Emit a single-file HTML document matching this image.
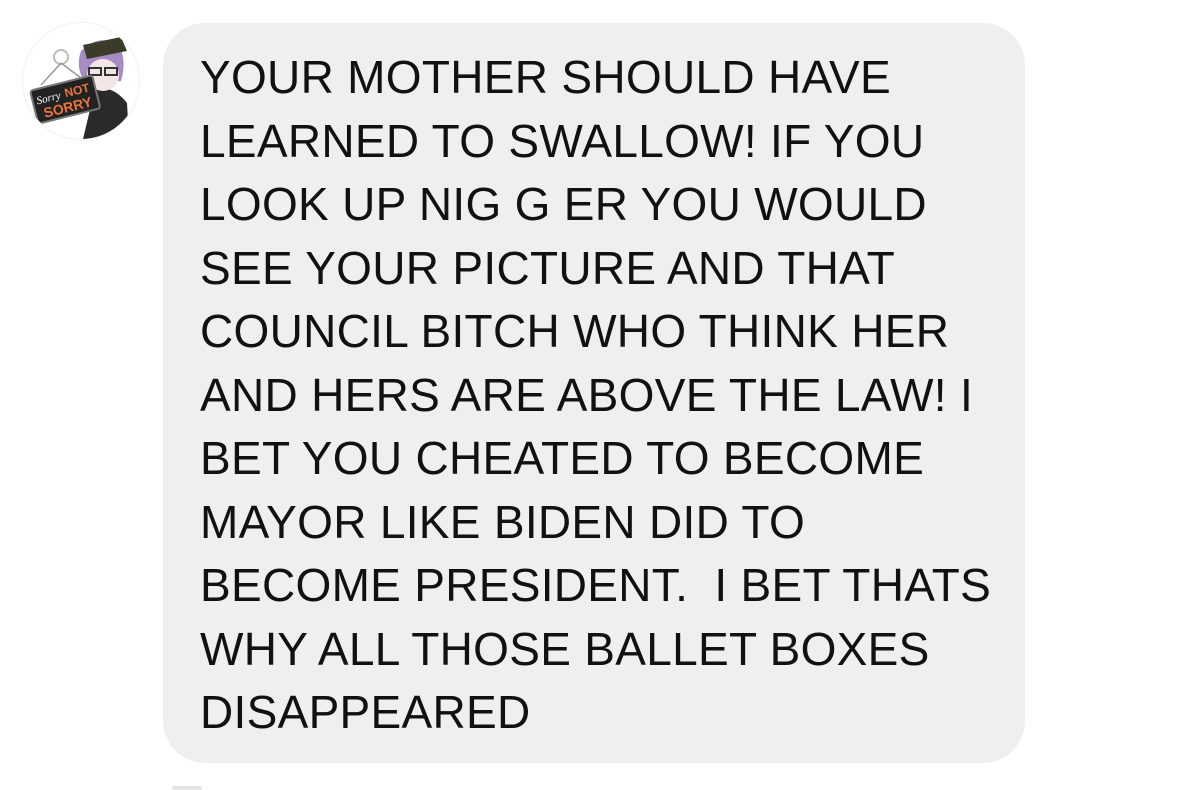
<!DOCTYPE html>
<html><head><meta charset="utf-8">
<style>
html,body{margin:0;padding:0;background:#fff;width:1200px;height:790px;overflow:hidden;}
.bubble{position:absolute;left:163px;top:23px;width:862px;height:740px;background:#efefef;border-radius:42px;}
.txt{position:absolute;left:200px;top:46px;font-family:"Liberation Sans",Arial,sans-serif;font-size:46px;line-height:63.5px;color:#111;white-space:pre;letter-spacing:0.3px;}
.av{position:absolute;left:22px;top:22px;width:116px;height:116px;border-radius:50%;background:#fff;border:1px solid #f2f2f2;overflow:hidden;}
</style></head><body>
<div class="av">
<svg width="116" height="116" viewBox="0 0 116 116">
<path d="M72 66 Q90 62 104 80 L106 116 L60 116 Z" fill="#2a2a2a"/>
<path d="M58 28 Q76 10 96 22 Q104 38 98 58 L62 60 Q52 44 58 28Z" fill="#a78bc4"/>
<path d="M60 22 L98 14 L104 28 L64 36Z" fill="#3b3b2a"/>
<ellipse cx="80" cy="52" rx="16" ry="16" fill="#f3e6e6"/>
<rect x="66" y="45" width="12" height="7" fill="none" stroke="#333" stroke-width="2"/>
<rect x="82" y="45" width="12" height="7" fill="none" stroke="#333" stroke-width="2"/>
<circle cx="38" cy="34" r="7" fill="none" stroke="#bbb" stroke-width="2"/>
<line x1="38" y1="40" x2="18" y2="62" stroke="#999" stroke-width="1.5"/>
<line x1="38" y1="40" x2="62" y2="58" stroke="#999" stroke-width="1.5"/>
<g transform="rotate(-14 40 76)">
<rect x="10" y="60" width="64" height="34" rx="3" fill="#222" stroke="#777" stroke-width="2"/>
<text x="14" y="75" font-family="Liberation Serif,serif" font-style="italic" font-size="11" fill="#fff">Sorry</text>
<text x="43" y="75" font-family="Liberation Sans,sans-serif" font-weight="bold" font-size="12" fill="#e8763a">NOT</text>
<text x="18" y="90" font-family="Liberation Sans,sans-serif" font-weight="bold" font-size="14" fill="#e8763a">SORRY</text>
</g>
</svg>
</div>
<div class="bubble"></div>
<div class="txt">YOUR MOTHER SHOULD HAVE
LEARNED TO SWALLOW! IF YOU
LOOK UP NIG G ER YOU WOULD
SEE YOUR PICTURE AND THAT
COUNCIL BITCH WHO THINK HER
AND HERS ARE ABOVE THE LAW! I
BET YOU CHEATED TO BECOME
MAYOR LIKE BIDEN DID TO
BECOME PRESIDENT.  I BET THATS
WHY ALL THOSE BALLET BOXES
DISAPPEARED</div>
<div style="position:absolute;left:172px;top:786px;width:30px;height:4px;background:#ccc;border-radius:2px;opacity:.5"></div>
</body></html>
